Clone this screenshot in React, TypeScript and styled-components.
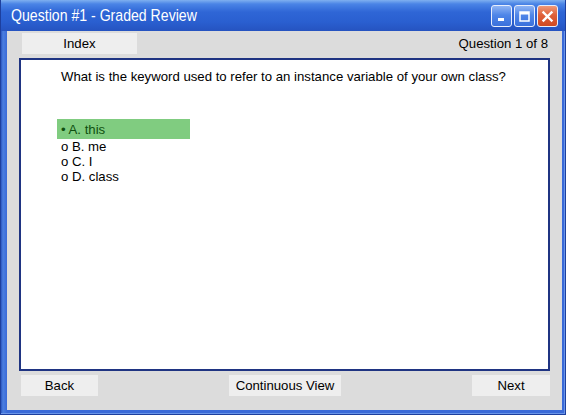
import React from "react";
import styled, { createGlobalStyle } from "styled-components";

const Global = createGlobalStyle`
  html, body { margin: 0; padding: 0; background: #ffffff; }
  body { font-family: "Liberation Sans", Arial, sans-serif; }
`;

const Window = styled.div`
  width: 566px;
  height: 415px;
  box-sizing: border-box;
  display: flex;
  flex-direction: column;
  background: linear-gradient(90deg, #2a56c0 0px, #4b7fe0 2px, #3a6ad8 6px);
  border: 1px solid #1d3f9e;
  border-top: none;
  padding: 0 3px 4px 6px;
  box-shadow: inset -1px -1px 0 #6a95e8;
`;

const TitleBar = styled.div`
  height: 31px;
  margin: 0 -3px 0 -6px;
  display: flex;
  align-items: center;
  justify-content: space-between;
  padding: 0 7px 0 10px;
  background: linear-gradient(180deg, #7fb0f0 0px, #4a84e6 4px, #2f66d6 12px, #2a5fd0 22px, #2553c0 31px);
`;

const Title = styled.span`
  color: #ffffff;
  font-size: 17px;
  padding-top: 1px;
  white-space: nowrap;
  transform: scaleX(0.83);
  transform-origin: left center;
`;

const TitleButtons = styled.div`
  display: flex;
  gap: 2px;
  padding-top: 1px;
`;

const TitleButton = styled.div<{ $close?: boolean }>`
  width: 21px;
  height: 22px;
  box-sizing: border-box;
  border: 1px solid #e8eefc;
  border-radius: 3px;
  display: flex;
  align-items: center;
  justify-content: center;
  background: ${(p) =>
    p.$close
      ? "linear-gradient(180deg, #f09a78 0%, #e0603a 45%, #cf4a22 100%)"
      : "linear-gradient(180deg, #8fb4f4 0%, #4f86e8 45%, #3a70dc 100%)"};
`;

const Body = styled.div`
  flex: 1;
  background: #dcdcdc;
  display: flex;
  flex-direction: column;
  padding: 2px 12px 14px 12px;
`;

const TopRow = styled.div`
  display: flex;
  align-items: center;
  justify-content: space-between;
  height: 21px;
  padding: 0 2px 0 3px;
  margin-bottom: 4px;
`;

const Button = styled.div<{ $w: number }>`
  width: ${(p) => p.$w}px;
  height: 21px;
  background: #eeeeee;
  display: flex;
  align-items: center;
  justify-content: center;
  font-size: 13.2px;
  color: #000000;
`;

const Counter = styled.span`
  font-size: 13.2px;
  color: #000000;
`;

const Panel = styled.div`
  flex: 1;
  background: #ffffff;
  border: 2px solid #1f3482;
  padding: 9px 0 0 36px;
`;

const QuestionText = styled.div`
  font-size: 13.2px;
  color: #000000;
  padding-left: 4px;
  line-height: 15px;
  margin-bottom: 35px;
`;

const OptionList = styled.div`
  display: flex;
  flex-direction: column;
`;

const Option = styled.div<{ $selected?: boolean }>`
  width: 133px;
  box-sizing: border-box;
  padding-left: 4px;
  font-size: 13.2px;
  line-height: 15px;
  height: ${(p) => (p.$selected ? "20px" : "15px")};
  display: flex;
  align-items: ${(p) => (p.$selected ? "center" : "flex-start")};
  background: ${(p) => (p.$selected ? "#80cc80" : "transparent")};
  color: ${(p) => (p.$selected ? "#0f4f0f" : "#000000")};
`;

const BottomRow = styled.div`
  display: flex;
  align-items: center;
  justify-content: space-between;
  margin-top: 4px;
  padding: 0 0 0 2px;
`;

export default function App() {
  return (
    <>
      <Global />
      <Window>
        <TitleBar>
          <Title>Question #1 - Graded Review</Title>
          <TitleButtons>
            <TitleButton>
              <svg width="13" height="13" viewBox="0 0 13 13">
                <rect x="3" y="8" width="6" height="3" fill="#ffffff" />
              </svg>
            </TitleButton>
            <TitleButton>
              <svg width="13" height="13" viewBox="0 0 13 13">
                <rect x="2" y="2" width="9" height="9" fill="none" stroke="#ffffff" strokeWidth="1.5" />
                <rect x="2" y="2" width="9" height="2.5" fill="#ffffff" />
              </svg>
            </TitleButton>
            <TitleButton $close>
              <svg width="13" height="13" viewBox="0 0 13 13">
                <path d="M2.5 2.5 L10.5 10.5 M10.5 2.5 L2.5 10.5" stroke="#ffffff" strokeWidth="2.4" strokeLinecap="square" />
              </svg>
            </TitleButton>
          </TitleButtons>
        </TitleBar>
        <Body>
          <TopRow>
            <Button $w={115}>Index</Button>
            <Counter>Question 1 of 8</Counter>
          </TopRow>
          <Panel>
            <QuestionText>
              What is the keyword used to refer to an instance variable of your own class?
            </QuestionText>
            <OptionList>
              <Option $selected>• A. this</Option>
              <Option>o B. me</Option>
              <Option>o C. I</Option>
              <Option>o D. class</Option>
            </OptionList>
          </Panel>
          <BottomRow>
            <Button $w={77}>Back</Button>
            <Button $w={112}>Continuous View</Button>
            <Button $w={78}>Next</Button>
          </BottomRow>
        </Body>
      </Window>
    </>
  );
}
